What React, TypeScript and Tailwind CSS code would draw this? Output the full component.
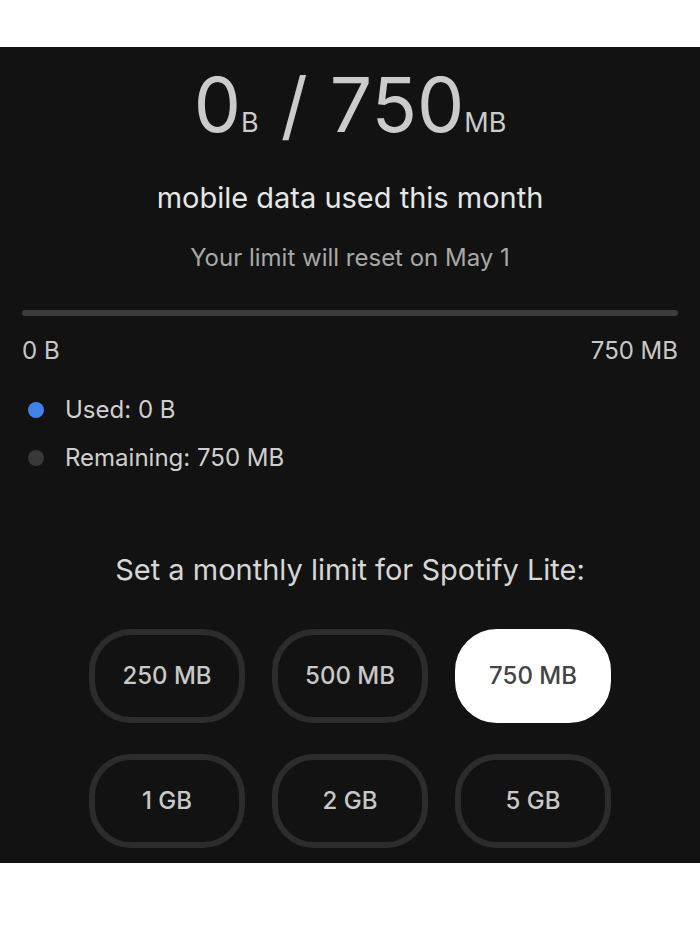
import React from 'react';

const limits = ['250 MB', '500 MB', '750 MB', '1 GB', '2 GB', '5 GB'];
const selected = '750 MB';

export default function App() {
  return (
    <div className="min-h-[933px] bg-white font-['Inter',sans-serif]">
      <div className="h-[47px] bg-white" />

      <div className="h-[816px] bg-[#121212] px-[22px] pt-[21px]">
        {/* usage headline */}
        <div className="flex items-baseline justify-center text-[75px] leading-[74px] text-[#cbcbcb]">
          <span>0</span>
          <span className="text-[27px]">B</span>
          <span className="mx-[22px]">/</span>
          <span>750</span>
          <span className="text-[27px]">MB</span>
        </div>

        <p className="mt-[20px] text-center text-[29px] leading-[36px] text-[#e6e6e6]">
          mobile data used this month
        </p>
        <p className="mt-[27px] text-center text-[24px] leading-[30px] text-[#a8a8a8]">
          Your limit will reset on May 1
        </p>

        {/* progress bar */}
        <div className="mt-[37px] h-[6px] w-full rounded-full bg-[#3c3c3c]" />
        <div className="mt-[20px] flex justify-between text-[24px] leading-[30px] text-[#c8c8c8]">
          <span>0 B</span>
          <span>750 MB</span>
        </div>

        {/* legend */}
        <div className="mt-[29px] flex items-center gap-[21px] text-[24px] leading-[30px] text-[#cfcfcf]">
          <span className="ml-[6px] h-[16px] w-[16px] rounded-full bg-[#3f82e8]" />
          <span>Used: 0 B</span>
        </div>
        <div className="mt-[18px] flex items-center gap-[21px] text-[24px] leading-[30px] text-[#cfcfcf]">
          <span className="ml-[6px] h-[16px] w-[16px] rounded-full bg-[#383838]" />
          <span>Remaining: 750 MB</span>
        </div>

        <p className="mt-[79px] text-center text-[29px] leading-[36px] text-[#d6d6d6]">
          Set a monthly limit for Spotify Lite:
        </p>

        {/* limit choices */}
        <div className="mt-[41px] grid grid-cols-[156px_156px_156px] justify-center gap-x-[27px] gap-y-[31px]">
          {limits.map((l) => (
            <button
              key={l}
              className={
                l === selected
                  ? 'flex h-[94px] items-center justify-center rounded-[42px] border-[6px] border-white bg-white text-[24px] font-medium text-[#444]'
                  : 'flex h-[94px] items-center justify-center rounded-[42px] border-[6px] border-[#2c2c2c] text-[24px] font-medium text-[#c8c8c8]'
              }
            >
              {l}
            </button>
          ))}
        </div>
      </div>
    </div>
  );
}
